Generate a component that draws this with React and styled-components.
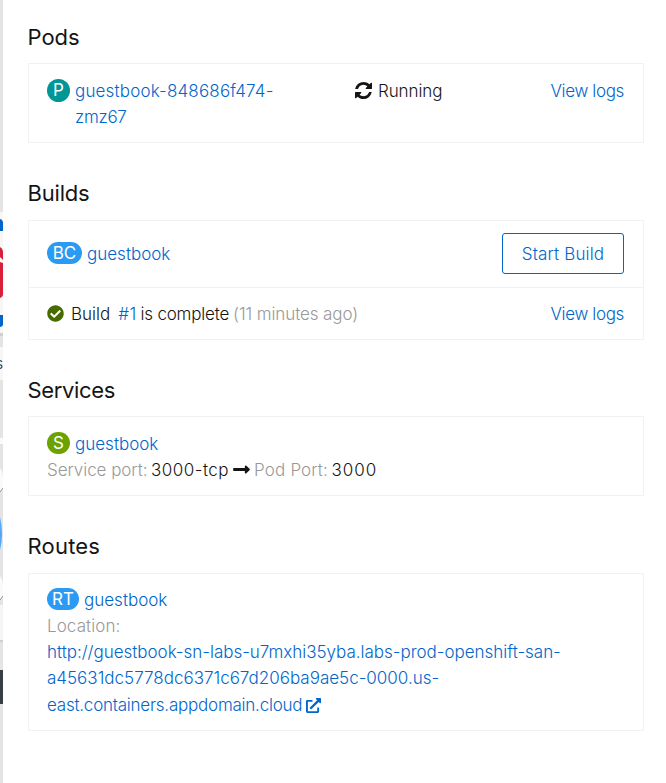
import React from 'react';
import styled, { createGlobalStyle } from 'styled-components';
import { FaCheckCircle, FaLongArrowAltRight, FaExternalLinkAlt } from 'react-icons/fa';

const GlobalStyle = createGlobalStyle`
  * { box-sizing: border-box; }
  body { margin: 0; background: #fff; }
`;

const Page = styled.div`
  display: flex;
  width: 666px;
  height: 783px;
  overflow: hidden;
  font: 300 17px/26.2px Inter, sans-serif;
  color: #151515;
  white-space: nowrap;
`;

const Canvas = styled.svg`
  flex: none;
  width: 3px;
  height: 783px;
`;

const Panel = styled.main`
  flex: 1;
  display: flex;
  flex-direction: column;
  gap: 36px;
  padding: 23px 22px 0 25px;
  background: #fff;
`;

const Section = styled.section`
  display: flex;
  flex-direction: column;
  gap: 12.4px;
`;

const Heading = styled.h2`
  margin: 0;
  font-size: 22px;
  font-weight: 400;
  line-height: 28px;
  letter-spacing: ${(p) => p.$track || 0}px;
  text-indent: -0.5px;
`;

const Card = styled.div`
  height: ${(p) => p.$height}px;
  border: 1px solid #f2f2f2;
`;

const Row = styled.div`
  display: flex;
  align-items: ${(p) => (p.$top ? 'flex-start' : 'center')};
  height: ${(p) => p.$height}px;
  padding: ${(p) => (p.$top ? '13.6px' : '0')} 19px 0 18px;
  & + & { border-top: 1px solid #f2f2f2; padding-top: 1px; }
`;

const Stack = styled.div`
  padding: ${(p) => p.$inset}px 18px;
`;

const Line = styled.div`
  display: flex;
  align-items: center;
  height: 26.2px;
  margin-top: ${(p) => p.$offset || 0}px;
`;

const Resource = styled.div`
  display: flex;
  width: ${(p) => (p.$width ? `${p.$width}px` : 'auto')};
`;

const Badge = styled.span`
  flex: none;
  align-self: flex-start;
  width: ${(p) => p.$width}px;
  height: 22.6px;
  margin: 1px 5px 0 0;
  border-radius: 12px;
  background: ${(p) => p.$color};
  color: #fff;
  font-weight: 400;
  line-height: 23.6px;
  text-align: center;
`;

const Text = styled.span`
  letter-spacing: ${(p) => p.$track || 0}px;
  margin-left: ${(p) => p.$gap || 0}px;
  color: ${(p) => (p.$muted ? '#999' : 'inherit')};
`;

const Link = styled.a`
  display: ${(p) => (p.$block ? 'block' : 'inline')};
  color: #0066cc;
  letter-spacing: ${(p) => p.$track || 0}px;
  margin-left: ${(p) => p.$gap || 0}px;
`;

const Action = styled(Link)`
  margin-left: auto;
`;

const Button = styled.button`
  width: 122px;
  height: 41px;
  margin-left: auto;
  padding: 0;
  border: 1px solid #0066cc;
  border-radius: 3px;
  background: #fff;
  color: #0066cc;
  font: inherit;
  letter-spacing: 0.15px;
`;

const Status = styled.div`
  display: flex;
  align-items: center;
  height: 26.2px;
`;

const SyncGlyph = styled.svg`
  width: 17px;
  height: 17px;
  margin-top: -2px;
  fill: currentColor;
`;

function SyncIcon() {
  return (
    <SyncGlyph viewBox="0 0 1536 1536">
      <path d="M1511 928q0 5-1 7-64 268-268 434.5T764 1536q-146 0-282.5-55T238 1324l-129 129q-19 19-45 19t-45-19-19-45V960q0-26 19-45t45-19h448q26 0 45 19t19 45-19 45l-137 137q71 66 161 102t187 36q134 0 250-65t186-179q11-17 53-117 8-23 30-23h192q13 0 22.5 9.5t9.5 22.5zm25-800v448q0 26-19 45t-45 19h-448q-26 0-45-19t-19-45 19-45l138-138Q969 256 768 256q-134 0-250 65T332 500q-11 17-53 117-8 23-30 23H50q-13 0-22.5-9.5T18 608v-7q65-268 270-434.5T768 0q146 0 284 55.5T1297 212l130-129q19-19 45-19t45 19 19 45z" />
    </SyncGlyph>
  );
}

function TopologyEdge() {
  return (
    <Canvas viewBox="0 0 3 783">
      <rect width="3" height="783" fill="#e4e4e4" />
      <rect y="212" width="3" height="121" fill="#f7f7f7" />
      <rect y="333" width="3" height="3" fill="#cfcfcf" />
      <path d="M0 219Q2 219 3 222V231H0Z" fill="#0066cc" />
      <path d="M0 247Q2 248 3 251V295Q2 298 0 298Z" fill="#d9203a" />
      <path d="M0 257l3 3v3l-3-1z" fill="#f7f7f7" />
      <path d="M0 315H3V325Q2 327 0 327Z" fill="#0066cc" />
      <rect y="347" width="3" height="33" fill="#f7f7f7" />
      <text x="-5" y="369" fontSize="16" fill="#333">s</text>
      <rect y="438" width="3" height="6" fill="#fafafa" />
      <path d="M0 468Q3 472 3 478V488L0 492Z" fill="#fafafa" />
      <path d="M3 488L0 492" stroke="#999" />
      <path d="M0 517Q4 534 0 550Z" fill="#52a8f5" />
      <path d="M0 576Q3 580 3 586V596L0 600Z" fill="#fafafa" />
      <path d="M3 596L0 600" stroke="#999" />
      <rect y="605" width="3" height="35" fill="#f5f5f5" />
      <rect y="640" width="3" height="2" fill="#cfcfcf" />
      <rect y="670" width="3" height="34" fill="#393f44" />
    </Canvas>
  );
}

export default function App() {
  return (
    <Page>
      <GlobalStyle />
      <TopologyEdge />
      <Panel>
        <Section>
          <Heading>Pods</Heading>
          <Card $height={80}>
            <Row $top $height={78}>
              <Resource $width={308}>
                <Badge $width={23} $color="#009596">P</Badge>
                <div>
                  <Link $block $track={0.17}>guestbook-848686f474-</Link>
                  <Link $block $track={-0.3}>zmz67</Link>
                </div>
              </Resource>
              <Status>
                <SyncIcon />
                <Text $gap={6} $track={-0.1}>Running</Text>
              </Status>
              <Action $track={-0.35}>View logs</Action>
            </Row>
          </Card>
        </Section>

        <Section>
          <Heading $track={-0.2}>Builds</Heading>
          <Card $height={120}>
            <Row $height={66}>
              <Resource>
                <Badge $width={35} $color="#2b9af3">BC</Badge>
                <Link>guestbook</Link>
              </Resource>
              <Button>Start Build</Button>
            </Row>
            <Row $height={52}>
              <FaCheckCircle size={17} color="#486b00" />
              <Text $gap={7}>Build</Text>
              <Link $gap={8} $track={0.4}>#1</Link>
              <Text $gap={4} $track={-0.2}>is complete</Text>
              <Text $gap={4} $track={-0.1} $muted>(11 minutes ago)</Text>
              <Action $track={-0.35}>View logs</Action>
            </Row>
          </Card>
        </Section>

        <Section>
          <Heading $track={-0.35}>Services</Heading>
          <Card $height={80}>
            <Stack $inset={13.4}>
              <Line>
                <Badge $width={23} $color="#6ca100">S</Badge>
                <Link>guestbook</Link>
              </Line>
              <Line>
                <Text $track={-0.05} $muted>Service port:</Text>
                <Text $gap={3.5} $track={0.5}>3000-tcp</Text>
                <Text as={FaLongArrowAltRight} size={19} $gap={2.5} />
                <Text $gap={3.5} $track={0.15} $muted>Pod Port:</Text>
                <Text $gap={3.5} $track={1}>3000</Text>
              </Line>
            </Stack>
          </Card>
        </Section>

        <Section>
          <Heading $track={0.2}>Routes</Heading>
          <Card $height={158}>
            <Stack $inset={13}>
              <Line>
                <Badge $width={32} $color="#2b9af3">RT</Badge>
                <Link>guestbook</Link>
              </Line>
              <Line>
                <Text $track={0.1} $muted>Location:</Text>
              </Line>
              <Link $block $track={-0.02}>http://guestbook-sn-labs-u7mxhi35yba.labs-prod-openshift-san-</Link>
              <Link $block>a45631dc5778dc6371c67d206ba9ae5c-0000.us-</Link>
              <Line $offset={0.7}>
                <Link $track={-0.23}>east.containers.appdomain.cloud</Link>
                <Link as={FaExternalLinkAlt} size={15} $gap={4} />
              </Line>
            </Stack>
          </Card>
        </Section>
      </Panel>
    </Page>
  );
}
